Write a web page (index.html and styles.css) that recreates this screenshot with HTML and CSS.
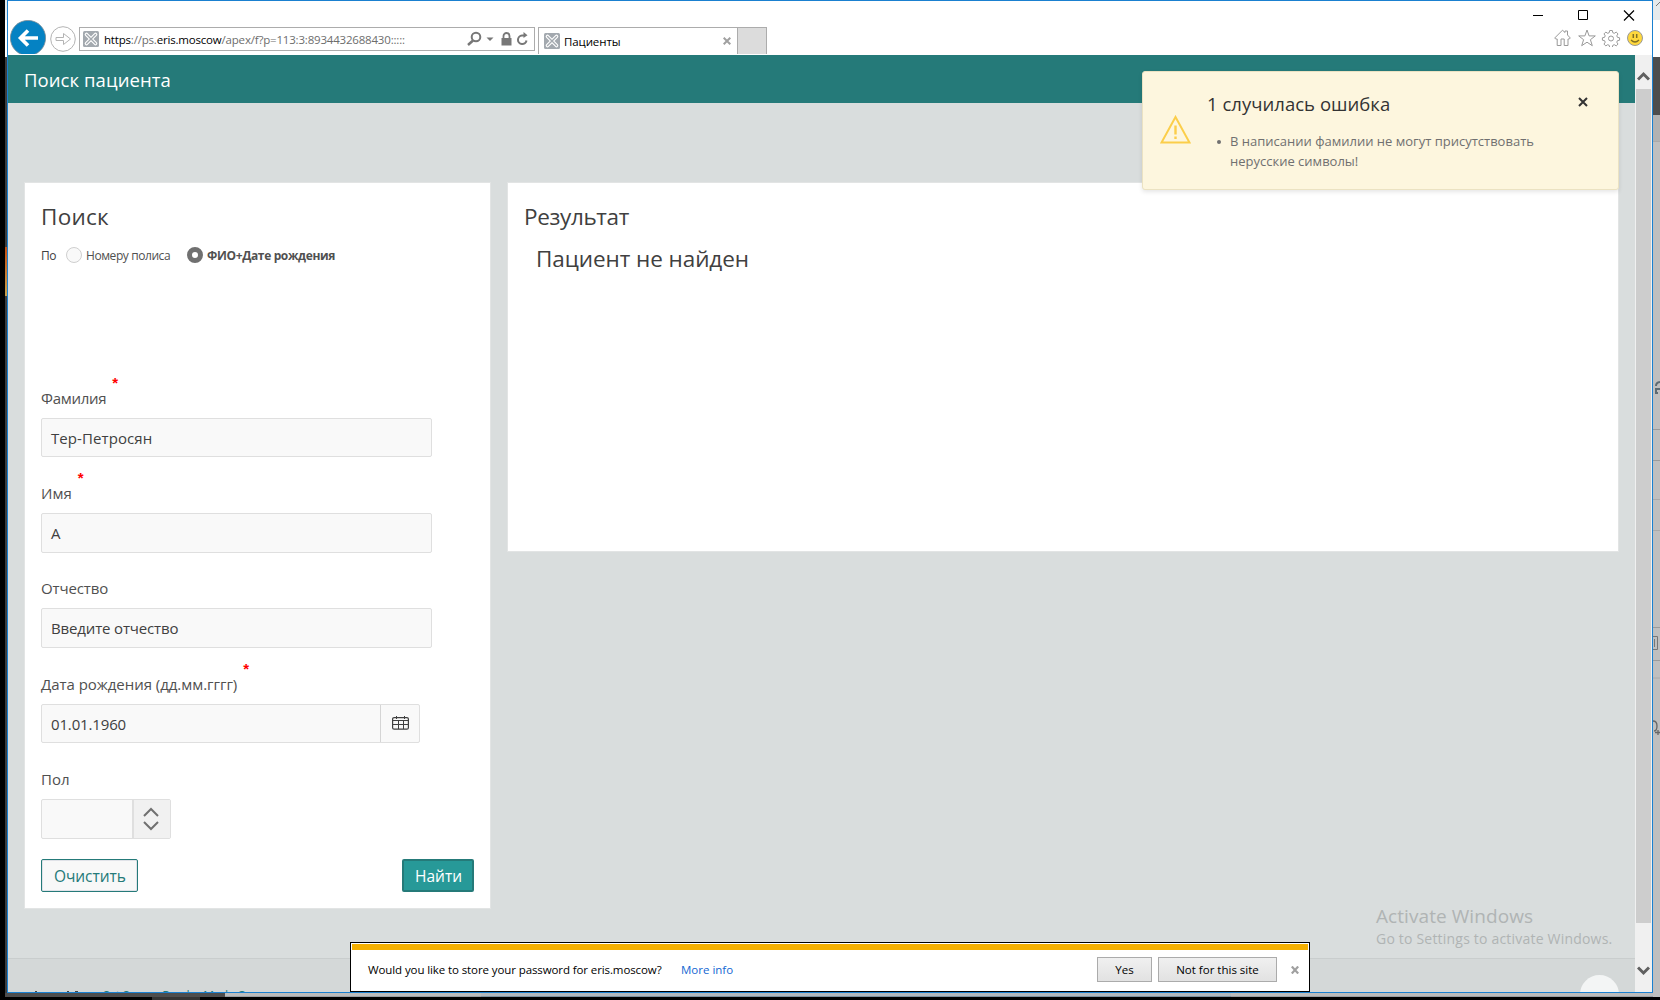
FILE: index.html
```html
<!DOCTYPE html>
<html lang="ru">
<head>
<meta charset="utf-8">
<title>Пациенты</title>
<link rel="stylesheet" href="styles.css">
</head>
<body>
<div class="desktop">
  <div class="edge-left"><i class="edge-orange"></i></div>
  <div class="window">
    <header class="chrome">
      <div class="nav">
        <svg class="back" width="36" height="36" viewBox="0 0 36 36"><circle cx="18" cy="18" r="17.6" fill="#0582c3" stroke="#7c8b94" stroke-width=".8"/><path d="M28 18H11M18 10.500L10.500 18L18 25.500" fill="none" stroke="#fff" stroke-width="3.600"/></svg>
        <svg class="fwd" width="26" height="26" viewBox="0 0 26 26" fill="none" stroke="#b3b3b3"><circle cx="13" cy="13" r="12.300"/><path d="M6 11.500h7.500V7.500L20.500 13L13.500 18.500V14.500H6z" stroke-linejoin="round"/></svg>
        <div class="address">
          <svg width="16" height="16" viewBox="0 0 16 16"><use href="#fav"/></svg>
          <span class="url"><b>https</b>://ps.<b>eris.moscow</b>/apex/f?p=113:3:8934432688430:::::</span>
          <svg class="addr-icons" width="62" height="16" viewBox="0 0 62 16" fill="none" stroke="#777"><circle cx="9" cy="6" r="4.300" stroke-width="2"/><path d="M6 9.500L1 14" stroke-width="2.500"/><path d="M19.500 6.500h7l-3.500 3.500z" fill="#777" stroke="none"/><path d="M34.500 7h10v7.500h-10z" fill="#777" stroke="none"/><path d="M36.500 7.500V5a3 3 0 0 1 6 0V7.500" stroke-width="1.800"/><path d="M59.500 9.500a4.300 4.300 0 1 1-4.500-5h3" stroke-width="2"/><path d="M56.500 1v6L60.500 4.300z" fill="#777" stroke="none"/></svg>
        </div>
        <div class="tab">
          <svg width="16" height="16" viewBox="0 0 16 16"><g id="fav"><rect width="16" height="16" rx="1.500" fill="#a3a9af"/><path d="M3.500 3.500L12.500 12.500M12.500 3.500L3.500 12.500" stroke="#fff" stroke-width="3.600" stroke-linecap="round"/><path d="M3.500 3.500L12.500 12.500M12.500 3.500L3.500 12.500" stroke="#a3a9af" stroke-width="1.400" stroke-linecap="round"/></g></svg>
          <span class="tab-name">Пациенты</span>
          <svg width="8" height="8" viewBox="0 0 8 8"><path d="M.7.7l6.600 6.600M7.300.7L.7 7.300" stroke="#a0a0a0" stroke-width="2"/></svg>
        </div>
        <div class="newtab"></div>
      </div>
      <div class="controls">
        <svg width="102" height="12" viewBox="0 0 102 12" fill="none" stroke="#000"><path d="M0 5.500h10M45.500.5h9v9h-9z" /><path d="M91 .5l10 10M101 .5l-10 10" stroke-width="1.200"/></svg>
        <svg class="tools" width="90" height="18" viewBox="0 0 90 18" fill="none" stroke="#999" stroke-linejoin="round"><path d="M.7 9L8.500 1.200L11 3.500V2h2.500v4L16.300 9l-1 1H14v6.500h-3.800V10H7v6.500H3.200V10H1.700z"/><path d="M33 1l2.100 5.900h6.200l-4.900 3.800 1.900 6L33 13.200l-5.300 3.500 1.900-6-4.900-3.800h6.200z"/><path d="M55.700 1.500h2.600l.5 2.200 1.500.6 1.900-1.200 1.800 1.800-1.200 1.900.6 1.500 2.200.5v2.400l-2.200.5-.6 1.500 1.200 1.900-1.800 1.800-1.900-1.200-1.500.6-.5 2.200h-2.600l-.5-2.200-1.500-.6-1.900 1.200-1.800-1.800 1.200-1.900-.6-1.500-2.200-.5V8.800l2.200-.5.6-1.500-1.200-1.900 1.800-1.800 1.900 1.200 1.500-.6z"/><circle cx="57" cy="9.500" r="2.500"/><circle cx="81" cy="9" r="7.500" fill="#ffd83d"/><path d="M79.300 5v4M82.700 5v4" stroke="#806f25" stroke-width="1.500"/><path d="M77 11q4 4 8 0" stroke="#806f25" stroke-width="1.200"/></svg>
      </div>
    </header>
    <div class="viewport">
      <div class="page">
        <div class="titlebar"><span>Поиск пациента</span></div>
        <main class="content">
          <section class="card search">
            <h2><span class="t-search">Поиск</span></h2>
            <div class="radios">
              <span class="by">По</span><i class="radio"></i><span class="r1">Номеру полиса</span><i class="radio on"></i><b class="r2">ФИО+Дате рождения</b>
            </div>
            <div class="fields">
              <div class="field"><label><span class="l1">Фамилия</span><em>*</em></label><div class="input"><span class="v1">Тер-Петросян</span></div></div>
              <div class="field"><label><span class="l2">Имя</span><em>*</em></label><div class="input">А</div></div>
              <div class="field"><label><span class="l3">Отчество</span></label><div class="input"><span class="v3">Введите отчество</span></div></div>
              <div class="field"><label><span class="l4">Дата рождения (дд.мм.гггг)</span><em>*</em></label>
                <div class="input date"><span class="v4">01.01.1960</span><div class="addon"><svg width="17" height="14" viewBox="0 0 17 14" fill="none" stroke="#404040"><rect x=".6" y="1.600" width="15.800" height="11.600" rx="1.500" stroke-width="1.200"/><path d="M1 4.500h15M1 8.500h15M6.500 4.500v8.500M11.500 4.500v8.500M4.500 0v3M12.500 0v3"/></svg></div></div></div>
              <div class="field"><label><span class="l5">Пол</span></label>
                <div class="input select"><div class="spin"><svg width="16" height="24" viewBox="0 0 16 24" fill="none" stroke="#707070" stroke-width="2"><path d="M1 9l7-7 7 7M1 15l7 7 7-7"/></svg></div></div></div>
            </div>
            <div class="actions"><div class="btn"><span class="b1">Очистить</span></div><div class="btn hot"><span class="b2">Найти</span></div></div>
          </section>
          <section class="card result"><h2><span class="t-result">Результат</span></h2><p><span class="t-none">Пациент не найден</span></p></section>
        </main>
        <footer class="footer"><i class="tick t1"></i><i class="tick t2"></i><i class="tick t3"></i><span>Set Screen Reader Mode On</span><i class="top-btn"></i></footer>
      </div>
      <div class="scrollbar">
        <svg width="13" height="10" viewBox="0 0 13 10"><path d="M1 8.500L6.500 3L12 8.500" fill="none" stroke="#606060" stroke-width="3"/></svg>
        <div class="thumb"></div>
        <svg width="13" height="10" viewBox="0 0 13 10"><path d="M1 1.500L6.500 7L12 1.500" fill="none" stroke="#606060" stroke-width="3"/></svg>
      </div>
    </div>
    <aside class="alert">
      <svg width="31" height="29" viewBox="0 0 31 29"><path d="M15.500 2L29.500 27.500H1.500z" fill="none" stroke="#fbce4a" stroke-width="2"/><path d="M15.500 10.500v9M15.500 21.500v2.500" stroke="#fbce4a" stroke-width="2.400"/></svg>
      <div class="alert-body"><h3><span class="a0">1 случилась ошибка</span></h3><div class="errors"><i class="dot"></i><div><span class="a1">В написании фамилии не могут присутствовать</span><br><span class="a2">нерусские символы!</span></div></div></div>
      <svg class="alert-x" width="10" height="10" viewBox="0 0 10 10"><path d="M1 1l8 8M9 1L1 9" stroke="#333" stroke-width="2"/></svg>
    </aside>
    <div class="watermark"><div class="w1">Activate Windows</div><div class="w2">Go to Settings to activate Windows.</div></div>
    <div class="prompt">
      <div class="stripe"></div>
      <div class="prompt-row"><span class="q">Would you like to store your password for eris.moscow?</span><span class="more">More info</span>
        <div class="pbtn yes"><span class="p1">Yes</span></div><div class="pbtn no"><span class="p2">Not for this site</span></div>
        <svg width="8" height="8" viewBox="0 0 8 8"><path d="M.8.5l6.400 7M7.200.5L.8 7.500" stroke="#a0a0a0" stroke-width="2.200"/></svg></div>
    </div>
  </div>
  <div class="edge-right">
    <svg width="7" height="1000" viewBox="0 0 7 1000" fill="none"><path d="M7 2L3 6" stroke="#777"/><path d="M0 429.500h7M0 460.500h7M0 627.500h7M0 660.500h7" stroke="#9b9b9b"/><path d="M0 499.500h7M0 530.500h7M0 678h7M0 141.500h7" stroke="#aaa"/><path d="M7 382Q3 382.500 3 386M2 389h5M3 389v4h2" stroke="#5d6b73" stroke-width="2"/><path d="M0 636.500h4.500v13H0M1.500 639v8" stroke="#777"/><path d="M0 721q4 0 4 5t-3 5M2 732.500h5M5 730v5" stroke="#666" stroke-width="1.300"/></svg>
  </div>
  <div class="edge-bottom"><i class="eb-dark"></i><i class="eb-light"></i><i class="eb-blue"></i><i class="eb-light rest"></i></div>
</div>
</body>
</html>
```
FILE: styles.css
```css
* { box-sizing: border-box; }
body { margin: 0; background: #000; font-family: "Open Sans", "Noto Sans", sans-serif; color: #404040; }
svg { display: block; flex: none; }
i { font-style: normal; display: block; flex: none; }
h2, h3, p { margin: 0; font-weight: 400; }
span, b { white-space: nowrap; flex: none; }

.desktop { width: 1660px; height: 1000px; overflow: hidden; display: grid; grid-template-columns: 2px 1646px 7px; grid-template-rows: 993px 7px; padding-left: 5px; background: linear-gradient(#333, #333) 152px 997px / 48px 3px no-repeat; }
.edge-left { background: linear-gradient(#e5eaec 0 20px, #fff 20px 57px, #3d3d3d 57px); padding-top: 247px; }
.edge-orange { height: 49px; background: linear-gradient(#c44e12, #c8a04a); }
.edge-right { background: linear-gradient(#e5eaec 0 20px, #fff 20px 57px, #4d4d4d 57px 115px, #b2b2b2 115px 141px, #bfbfbf 141px); height: 997px; overflow: hidden; }
.edge-bottom { grid-column: 1 / 3; grid-row: 2; height: 4px; display: flex; }
.eb-dark { width: 220px; background: #4d4d4d; }
.eb-light { width: 256px; background: #bcbcbc; border-bottom: 1px solid #9a9fa3; }
.eb-blue { width: 750px; background: #b2b8bd; border-bottom: 1px solid #7e929f; }
.eb-light.rest { flex: 1; }

.window { position: relative; border: 1px solid #1a80d0; background: #fff; display: flex; flex-direction: column; }
.chrome { height: 54px; display: flex; justify-content: space-between; overflow: hidden; }
.nav { display: flex; padding-top: 26px; height: 53px; overflow: hidden; }
.nav > * { flex: none; }
.back { margin: -7px 0 0 2px; }
.fwd { margin: -1px 0 0 4px; }
.address { width: 456px; height: 24px; margin-left: 3px; border: 1px solid #acacac; display: flex; align-items: center; padding: 0 5px 0 3px; }
.url { margin-left: 5px; font-size: 11.5px; color: #6d6d6d; width: 363px; letter-spacing: -.19px; }
.url b { font-weight: 400; color: #000; }
.tab { width: 200px; height: 27px; margin-left: 3px; border: 1px solid #acacac; border-bottom: 0; display: flex; align-items: center; padding: 0 6px 0 5px; }
.tab-name { font-size: 11.5px; color: #000; margin: 0 auto 0 4px; letter-spacing: -.1px; }
.newtab { width: 29px; border: 1px solid #acacac; border-width: 1px 1px 0 0; background: #dcdcdc; height: 27px; }
.controls { width: 136px; padding: 9px 0 0 10px; }
.controls svg { margin-left: 7px; }
.controls .tools { margin: 7px 0 0 28px; }

.viewport { flex: 1; display: flex; min-height: 0; }
.page { width: 1627px; background: #d9dddd; display: flex; flex-direction: column; }
.titlebar { height: 48px; background: #257a79; color: #fff; font-size: 18.500px; line-height: 50px; padding-left: 16px; letter-spacing: .08px; }
.content { flex: 1; display: flex; align-items: flex-start; gap: 18px; padding: 80px 17px 0; }
.card { background: #fff; outline: 1px solid #e2e4e4; }
.search { width: 465px; height: 725px; padding: 13px 16px 16px; }
.result { flex: 1; height: 368px; padding: 13px 16px; }
.card h2, .card p { font-size: 22.500px; line-height: 42px; height: 40px; }
.t-search { letter-spacing: .25px; }
.t-result { letter-spacing: -.35px; }
.t-none { letter-spacing: -.07px; }
.card p { margin-top: 2px; padding-left: 12px; }
.radios { height: 38px; display: flex; align-items: center; font-size: 12px; color: #505050; }
.by { width: 25px; color: #404040; letter-spacing: -.5px; }
.radio { width: 16px; height: 16px; border-radius: 50%; border: 1px solid #cfcfcf; background: #f9f9f9; margin-right: 4px; }
.r1 { width: 101px; letter-spacing: -.42px; }
.r2 { letter-spacing: -.36px; }
.radio.on { border: 5px solid #707070; background: #fff; }
.fields { margin-top: 104px; display: flex; flex-direction: column; gap: 15.200px; }
.field { height: 80px; }
label { height: 40px; display: flex; font-size: 15px; line-height: 40px; color: #505050; }
.l1 { letter-spacing: -.28px; }
.l3 { letter-spacing: -.12px; }
.l4 { letter-spacing: -.04px; }
.v1 { letter-spacing: .08px; }
.v3 { letter-spacing: -.15px; }
.v4 { letter-spacing: -.15px; }
em { font: bold 15px/17px "Liberation Sans", sans-serif; color: #f00; margin: -4px 0 0 6px; }
.input { width: 391px; height: 39.400px; border: 1px solid #dfdfdf; border-radius: 2px; background: #f9f9f9; padding-left: 9px; font-size: 15px; line-height: 38.500px; }
.date { width: 379px; display: flex; justify-content: space-between; }
.addon { width: 39px; border-left: 1px solid #d5d5d5; padding: 11px 0 0 11px; }
.select { width: 130px; height: 40px; display: flex; justify-content: flex-end; }
.spin { width: 38px; border-left: 2px solid #dfdfdf; background: #f1f1f1; padding: 7px 0 0 9px; }
.actions { margin-top: 20.200px; display: flex; justify-content: space-between; }
.btn { height: 33px; border: 1px solid #257a79; border-radius: 2px; background: #f8f8f8; color: #257a79; font-size: 15.500px; line-height: 33px; width: 97px; padding-left: 12px; box-shadow: inset 0 0 0 1px #e0e2e8; }
.b1 { letter-spacing: -.08px; }
.btn.hot { width: 72px; background: #279998; color: #fff; border: 2px solid #257a79; line-height: 31px; padding-left: 11px; box-shadow: none; }

.footer { height: 34px; border-top: 1px solid #c9cdcd; background: #d4d8d8; display: flex; overflow: hidden; align-items: flex-start; padding: 28px 16px 0 27px; font-size: 12px; line-height: 18px; color: #257a79; }
.footer span { width: 1400px; letter-spacing: -.25px; }
.tick { height: 1px; margin-top: 4px; background: #444; }
.t1 { width: 2px; margin-right: 30px; }
.t2 { width: 2px; margin-right: 6px; }
.t3 { width: 3px; margin-right: 25px; }
.top-btn { width: 39px; height: 39px; border-radius: 50%; background: #f3f5f5; margin: -12px 0 0 auto; }

.scrollbar { width: 17px; background: #f0f0f0; display: flex; flex-direction: column; align-items: center; padding-top: 16px; }
.thumb { width: 15px; height: 834px; background: #cdcdcd; margin: 8px 0 43px; }

.alert { position: absolute; left: 1134px; top: 70px; width: 477px; height: 119px; background: #fdf6de; border: 1px solid #ebe2c2; border-radius: 3px; box-shadow: 0 2px 4px rgba(0,0,0,.1); display: flex; padding: 0 30px 0 17px; }
.alert > svg { margin-top: 43px; }
.alert-body { margin-left: 16px; width: 372px; }
h3 { font-size: 18.500px; line-height: 30px; margin-top: 17px; color: #333; letter-spacing: .03px; }
.errors { display: flex; padding-left: 10px; margin-top: 12px; font-size: 13px; line-height: 20px; color: #707070; }
.dot { width: 4px; height: 4px; border-radius: 50%; background: #707070; margin: 9px 9px 0 0; }
.alert > .alert-x { margin: 25px 0 0 0; }
.watermark { position: absolute; left: 1368px; top: 899px; color: #b0b4b4; }
.w1 { font-size: 19px; line-height: 32px; letter-spacing: .07px; }
.w2 { font-size: 14px; line-height: 14px; letter-spacing: .2px; }
.prompt { position: absolute; left: 342px; top: 941px; width: 960px; height: 50px; background: #fff; border: 1px solid #000; padding: 1px; }
.stripe { height: 6px; background: #f5b000; }
.prompt-row { display: flex; align-items: center; height: 39px; padding: 0 9px 0 16px; font-size: 11.500px; color: #000; }
.q { width: 313px; letter-spacing: -.1px; }
.more { color: #1467d2; margin-right: auto; }
.pbtn { border: 1px solid #ababab; background: linear-gradient(#f0f0f0, #e2e2e2); height: 25px; line-height: 23px; display: flex; justify-content: center; margin-right: 6px; }
.yes { width: 55px; }
.no { width: 119px; margin-right: 14px; }
```
